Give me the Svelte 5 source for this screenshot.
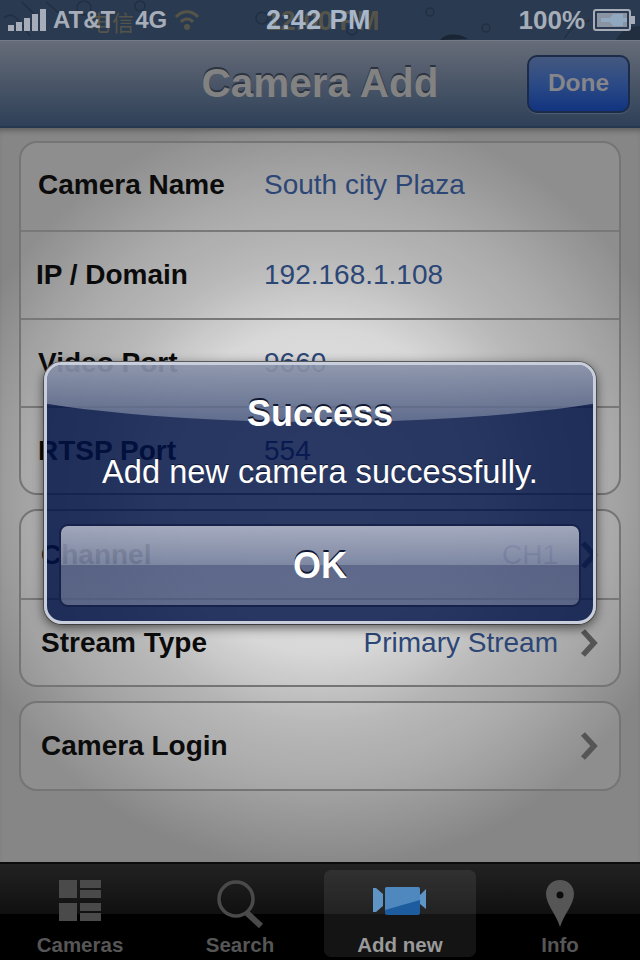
<script>
  const firstGroup = [
    { label: 'Camera Name', value: 'South city Plaza' },
    { label: 'IP / Domain', value: '192.168.1.108', tight: true },
    { label: 'Video Port', value: '9660' },
    { label: 'RTSP Port', value: '554' }
  ];
  const secondGroup = [
    { label: 'Channel', value: 'CH1' },
    { label: 'Stream Type', value: 'Primary Stream' }
  ];
</script>

<div class="screen">
  <div class="status">
    <svg class="drops" width="640" height="40" viewBox="0 0 640 40">
      <g fill="none" stroke="#17202e" stroke-width="1.5" opacity="0.4">
        <path d="M4 18 C14 8 22 26 30 36" />
        <path d="M22 2 L36 16" />
        <path d="M46 2 L60 14" />
        <circle cx="84" cy="8" r="7" />
        <circle cx="140" cy="6" r="5" />
        <circle cx="262" cy="18" r="6" />
        <circle cx="352" cy="30" r="5" />
        <circle cx="430" cy="12" r="4" />
        <circle cx="486" cy="28" r="4" />
        <path d="M565 38 C570 28 578 24 590 20" />
      </g>
      <path d="M440 40 C446 33 458 33 468 39 Z" fill="#141c28" opacity="0.7" />
      <path d="M616 40 C620 32 628 26 640 26 L640 40 Z" fill="#1b2635" opacity="0.6" />
    </svg>
    <span class="ghost carrier-ghost">电信</span>
    <svg class="ghost wifi-ghost" width="26" height="24" viewBox="0 0 26 24">
      <g fill="none" stroke="#555448" stroke-width="3">
        <path d="M2 9 C8 2 18 2 24 9" />
        <path d="M7 14 C10 10 16 10 19 14" />
      </g>
      <circle cx="13" cy="19" r="3" fill="#555448" />
    </svg>
    <span class="ghost clock-ghost">12:00 PM</span>

    <div class="status-left">
      <svg width="38" height="22" viewBox="0 0 38 22">
        <g fill="#a6adb8">
          <rect x="0" y="16" width="6" height="6" />
          <rect x="8" y="13" width="6" height="9" />
          <rect x="16" y="9" width="6" height="13" />
          <rect x="24" y="5" width="6" height="17" />
          <rect x="32" y="0" width="6" height="22" />
        </g>
      </svg>
      <span class="carrier">AT&amp;T</span>
      <span class="network">4G</span>
    </div>
    <span class="clock">2:42 PM</span>
    <div class="status-right">
      <span class="battery-text">100%</span>
      <svg width="42" height="22" viewBox="0 0 42 22">
        <rect x="1" y="1" width="36" height="20" rx="2" fill="none" stroke="#a6adb8" stroke-width="2" />
        <rect x="38" y="7" width="4" height="8" fill="#a6adb8" />
        <rect x="4" y="4" width="30" height="14" fill="#8a94a2" />
        <path d="M8 9 H17 L20 5 H30 V9 H34 V13 H30 V17 H20 L17 13 H8 Z" fill="#90a8c0" />
      </svg>
    </div>
  </div>

  <div class="nav">
    <h1>Camera Add</h1>
    <button class="done">Done</button>
  </div>

  <div class="content">
    <div class="card">
      {#each firstGroup as row}
        <div class="row" class:tight={row.tight}>
          <span class="label">{row.label}</span>
          <span class="value">{row.value}</span>
        </div>
      {/each}
    </div>

    <div class="card">
      {#each secondGroup as row}
        <div class="row link">
          <span class="label">{row.label}</span>
          <span class="value end">{row.value}</span>
          <svg class="chevron" width="18" height="30" viewBox="0 0 18 30">
            <path d="M3 3 L14 15 L3 27" />
          </svg>
        </div>
      {/each}
    </div>

    <div class="card">
      <div class="row link">
        <span class="label">Camera Login</span>
        <svg class="chevron pushed" width="18" height="30" viewBox="0 0 18 30">
          <path d="M3 3 L14 15 L3 27" />
        </svg>
      </div>
    </div>
  </div>

  <div class="tabbar">
    <div class="tab">
      <svg width="42" height="41" viewBox="0 0 42 41">
        <g fill="#4a4a4a">
          <rect x="0" y="0" width="18" height="18" />
          <rect x="0" y="23" width="18" height="18" />
          <rect x="21" y="0" width="21" height="8" />
          <rect x="21" y="10" width="21" height="8" />
          <rect x="21" y="23" width="21" height="8" />
          <rect x="21" y="33" width="21" height="8" />
        </g>
      </svg>
      <span>Cameras</span>
    </div>
    <div class="tab">
      <svg width="50" height="48" viewBox="0 0 50 48">
        <circle cx="21" cy="19" r="17" fill="none" stroke="#4a4a4a" stroke-width="3.5" />
        <path d="M32 33 L46 46" stroke="#4a4a4a" stroke-width="6" />
      </svg>
      <span>Search</span>
    </div>
    <div class="tab active">
      <svg width="54" height="30" viewBox="0 0 54 30">
        <path d="M0 2 L3 2 L10 8 V20 L3 26 L0 26 Z" fill="#5f95c4" />
        <rect x="12" y="1" width="35" height="28" rx="2" fill="#1d5c9e" />
        <path d="M12 3 Q12 1 14 1 H45 Q47 1 47 3 V14 L12 24 Z" fill="#4f88bf" />
        <path d="M47 9 L53 3 V23 L47 18 Z" fill="#5f95c4" />
      </svg>
      <span>Add new</span>
    </div>
    <div class="tab">
      <svg width="30" height="47" viewBox="0 0 30 47">
        <path d="M15 0 C7 0 1 6 1 14 C1 24 11 34 15 47 C19 34 29 24 29 14 C29 6 23 0 15 0 Z" fill="#565656" />
        <circle cx="15" cy="15" r="3.5" fill="#0c0c0c" />
      </svg>
      <span>Info</span>
    </div>
  </div>

  <div class="alert">
    <div class="gloss"></div>
    <h2>Success</h2>
    <p>Add new camera successfully.</p>
    <button class="ok"><span>OK</span></button>
  </div>
</div>

<style>
  :global(body) {
    margin: 0;
    font-family: 'Liberation Sans', Arial, sans-serif;
  }

  .screen {
    position: relative;
    width: 640px;
    height: 960px;
    overflow: hidden;
    display: flex;
    flex-direction: column;
    background: radial-gradient(circle 400px at 320px 490px, #eaeaea 0%, #d6d6d6 40%, #b4b4b4 58%, #a2a2a2 75%, #868686 95%);
  }

  .status {
    position: relative;
    height: 40px;
    flex: none;
    display: flex;
    align-items: center;
    justify-content: space-between;
    padding: 0 5px 0 8px;
    box-sizing: border-box;
    background: #2a3a50;
    color: #a6adb8;
    font-size: 24px;
    font-weight: 700;
  }

  .drops {
    position: absolute;
    left: 0;
    top: 0;
  }

  .ghost {
    position: absolute;
  }

  .carrier-ghost {
    left: 88px;
    top: 8px;
    font-size: 22px;
    font-weight: 400;
    font-family: 'Noto Sans CJK SC', sans-serif;
    color: #55544a;
    line-height: 26px;
    letter-spacing: 2px;
  }

  .wifi-ghost {
    left: 174px;
    top: 8px;
  }

  .clock-ghost {
    left: 266px;
    top: 6px;
    color: #55544a;
    white-space: nowrap;
    font-size: 27px;
    letter-spacing: -0.5px;
  }

  .status-left,
  .status-right {
    position: relative;
  }

  .status-left {
    display: flex;
    align-items: center;
    gap: 7px;
  }

  .network {
    margin-left: 13px;
  }

  .clock {
    position: absolute;
    left: 266px;
    color: #a8b6ca;
    font-size: 27px;
    letter-spacing: 0.4px;
  }

  .status-right {
    display: flex;
    align-items: center;
    gap: 8px;
  }

  .battery-text {
    font-size: 26px;
  }

  .nav {
    position: relative;
    height: 88px;
    flex: none;
    box-sizing: border-box;
    display: flex;
    align-items: center;
    justify-content: center;
    border-top: 1px solid #747a86;
    border-bottom: 2px solid #24374f;
    background: linear-gradient(#666c78, #2e4058);
  }

  h1 {
    margin: 0;
    font-size: 40.5px;
    font-weight: 700;
    color: #828282;
    text-shadow: 0 -2px 0 #2c3340;
  }

  .done {
    position: absolute;
    right: 10px;
    top: 14px;
    width: 103px;
    height: 58px;
    padding: 0 0 3px;
    border: 2px solid #1c2c48;
    border-radius: 10px;
    background: linear-gradient(#44587f, #2b4a85 50%, #123480);
    color: #85858a;
    font-family: inherit;
    font-size: 24.5px;
    font-weight: 700;
    box-shadow: 0 1px 1px rgba(120, 130, 150, 0.4);
  }

  .content {
    flex: 1;
    box-sizing: border-box;
    padding: 13px 19px 0;
    display: flex;
    flex-direction: column;
    gap: 14px;
    box-shadow: inset 0 6px 6px -4px rgba(0, 0, 0, 0.35);
  }

  .card {
    border: 2px solid #757575;
    border-radius: 18px;
    background: rgba(255, 255, 255, 0.07);
  }

  .row {
    height: 88px;
    box-sizing: border-box;
    display: flex;
    align-items: center;
    padding-left: 17px;
    border-bottom: 2px solid #787878;
  }

  .row:first-child {
    height: 89px;
  }

  .card:first-child .row:first-child {
    padding-bottom: 3px;
  }

  .row:last-child {
    height: 85px;
    border-bottom: none;
  }

  .row:only-child {
    height: 86px;
  }

  .row.tight {
    padding-left: 15px;
  }

  .row.link {
    padding-left: 20px;
    padding-right: 21px;
  }

  .label {
    width: 226px;
    flex: none;
    font-size: 28px;
    font-weight: 700;
    color: #0b0b0b;
  }

  .row.tight .label {
    width: 228px;
  }

  .value {
    font-size: 28px;
    color: #2c4676;
  }

  .value.end {
    margin-left: auto;
  }

  .chevron {
    margin-left: 22px;
    flex: none;
  }

  .chevron.pushed {
    margin-left: auto;
  }

  .chevron path {
    fill: none;
    stroke: #555;
    stroke-width: 5.5;
  }

  .tabbar {
    height: 98px;
    flex: none;
    box-sizing: border-box;
    display: grid;
    grid-template-columns: repeat(4, 1fr);
    padding: 6px 0 3px;
    border-top: 2px solid #0c0c0c;
    background: linear-gradient(#222 0, #101010 50px, #000 50px);
  }

  .tab {
    display: flex;
    flex-direction: column;
    align-items: center;
    justify-content: flex-end;
    gap: 2px;
    border-radius: 7px;
    font-size: 20.5px;
    font-weight: 700;
    color: #565656;
  }

  .tab svg {
    margin-bottom: auto;
    margin-top: 10px;
  }

  .tab.active {
    margin: 0 4px;
    background: rgba(255, 255, 255, 0.08);
    color: #9a9a9a;
  }

  .tab.active svg {
    margin-top: 16px;
  }

  .tab span {
    line-height: 24px;
  }

  .alert {
    position: absolute;
    left: 44px;
    top: 362px;
    width: 552px;
    height: 262px;
    box-sizing: border-box;
    overflow: hidden;
    display: flex;
    flex-direction: column;
    align-items: center;
    border: 3px solid #c8cedb;
    border-radius: 18px;
    background: rgba(0, 17, 71, 0.82);
    box-shadow: 0 3px 12px rgba(0, 0, 0, 0.65), 0 0 0 1px #6e6e6e;
    color: #fff;
  }

  .gloss {
    position: absolute;
    left: -127px;
    top: -78px;
    width: 800px;
    height: 135px;
    border-radius: 50%;
    background: linear-gradient(transparent 57%, rgba(212, 217, 223, 0.6) 58%, rgba(180, 190, 205, 0.4) 100%);
  }

  h2 {
    position: relative;
    margin: 29px 0 0;
    font-size: 36px;
    line-height: 40px;
    font-weight: 700;
    text-shadow: 0 -2px 0 #101830;
  }

  p {
    position: relative;
    margin: 19px 0 0;
    font-size: 32.6px;
    line-height: 38px;
    text-shadow: 0 -1px 0 #101830;
  }

  .ok {
    position: relative;
    margin-top: auto;
    margin-bottom: 14px;
    width: 522px;
    height: 83px;
    padding: 0;
    box-sizing: border-box;
    border: 2px solid #17224a;
    border-radius: 9px;
    background: linear-gradient(rgba(247, 248, 252, 0.6), rgba(231, 235, 242, 0.45) 50%, rgba(216, 220, 230, 0.3) 50%, rgba(216, 220, 230, 0.32) 100%);
    color: #fff;
    font-family: inherit;
    font-size: 36px;
    font-weight: 700;
    text-shadow: 0 -2px 0 #101830;
  }
</style>
